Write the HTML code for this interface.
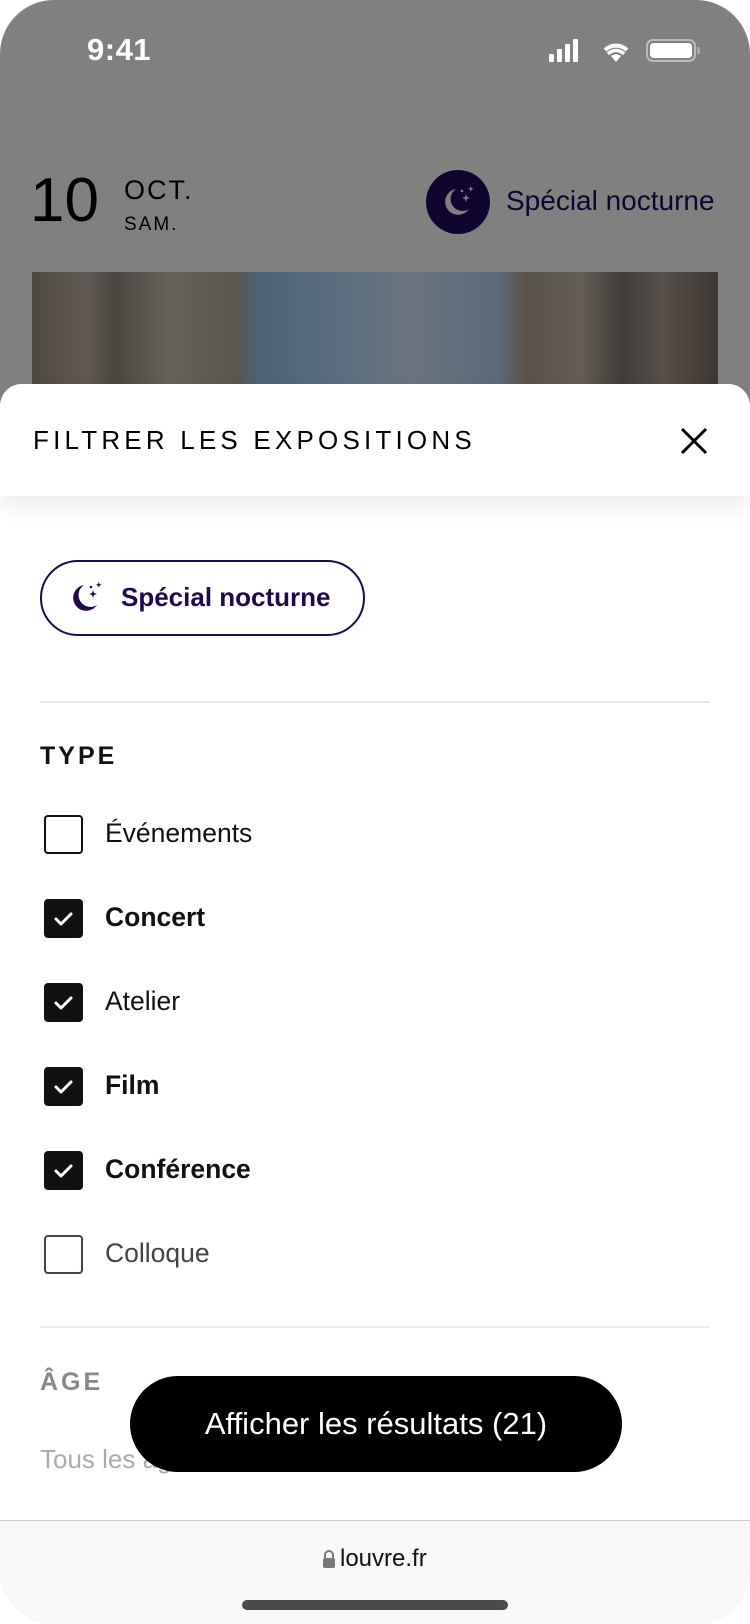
<!DOCTYPE html>
<html><head><meta charset="utf-8"><style>
*{margin:0;padding:0;box-sizing:border-box}
body{width:750px;height:1624px;overflow:hidden;background:#fff;font-family:"Liberation Sans",sans-serif;position:relative}
.frame{position:absolute;inset:0;border-radius:54px;overflow:hidden;background:#808080}
.abs{position:absolute}
.photo{left:32px;top:272px;width:686px;height:130px;background:linear-gradient(90deg,#4e4840 0%,#5f5a52 8%,#4a4640 12%,#66625a 20%,#5a564e 30%,#4c6378 33%,#5a6e80 45%,#6b7480 55%,#5a6a7a 68%,#5a5248 72%,#645e56 80%,#403c38 86%,#56504a 92%,#3e3630 100%)}
.sheet{left:0;top:384px;width:750px;height:1240px;background:#fff;border-radius:22px 22px 0 0}
.hdr{left:0;top:384px;width:750px;height:112px;background:#fff;border-radius:22px 22px 0 0;box-shadow:0 10px 22px rgba(0,0,0,0.08)}
.cb{position:absolute;left:44px;width:39px;height:39px;border-radius:4px}
.cb.off{border:2.5px solid #111;background:#fff}
.cb.on{background:#111}
.lbl{position:absolute;left:105px;font-size:26.5px;color:#111}
</style></head><body>
<div class="frame">
<div class="abs" style="left:87px;top:32px;font-size:31px;color:#fff;font-weight:bold;letter-spacing:0.5px">9:41</div>
<svg class="abs" style="left:548px;top:37px" width="152" height="28" viewBox="0 0 152 28">
<rect x="1" y="17" width="5" height="8" rx="1" fill="#fff"/><rect x="9" y="12" width="5" height="13" rx="1" fill="#fff"/><rect x="17" y="7" width="5" height="18" rx="1" fill="#fff"/><rect x="25" y="2" width="5" height="23" rx="1" fill="#fff"/>
<path d="M68 25 L63 19 A8 8 0 0 1 73 19 Z" fill="#fff"/><path d="M57 13 A16 16 0 0 1 79 13" stroke="#fff" stroke-width="4" fill="none"/><path d="M60 17 A11 11 0 0 1 76 17" stroke="#fff" stroke-width="3.5" fill="none"/>
<rect x="99" y="3" width="48" height="21" rx="6" fill="none" stroke="#bbb" stroke-width="2"/><rect x="102" y="6" width="42" height="15" rx="3.5" fill="#fff"/><rect x="149" y="10" width="3" height="7" rx="1" fill="#aaa"/>
</svg>
<div class="abs" style="left:30px;top:170px;font-size:62px;color:#000;line-height:1">10</div>
<div class="abs" style="left:124px;top:175px;font-size:27px;color:#000;letter-spacing:2px">OCT.</div>
<div class="abs" style="left:124px;top:214px;font-size:19px;color:#000;letter-spacing:2px">SAM.</div>
<svg class="abs" style="left:426px;top:170px" width="64" height="64" viewBox="0 0 64 64"><circle cx="32" cy="32" r="32" fill="#0f0530"/><path d="M30 19 A13 13 0 1 0 43 39 A11 11 0 0 1 30 19Z" fill="#808080"/><path d="M39 27l1 -3 1 3 3 1 -3 1 -1 3 -1 -3 -3 -1z" fill="#808080"/><path d="M44 18l.8 -2 .8 2 2 .8 -2 .8 -.8 2 -.8 -2 -2 -.8z" fill="#808080"/><circle cx="36" cy="21" r="1.3" fill="#808080"/></svg>
<div class="abs" style="left:506px;top:185px;font-size:28px;color:#0f0530">Spécial nocturne</div>
<div class="abs photo"></div>
<div class="abs sheet"></div>
<div class="abs hdr"></div>
<div class="abs" style="left:33px;top:425px;font-size:26px;color:#000;letter-spacing:4.2px">FILTRER LES EXPOSITIONS</div>
<svg class="abs" style="left:680px;top:427px" width="28" height="28" viewBox="0 0 28 28"><path d="M2 2L26 26M26 2L2 26" stroke="#000" stroke-width="3"/></svg>
<div class="abs" style="left:40px;top:560px;width:325px;height:76px;border:2.5px solid #1e0a4a;border-radius:38px"></div>
<svg class="abs" style="left:70px;top:582px" width="36" height="32" viewBox="0 0 36 32"><path d="M14 3 A13 13 0 1 0 27 23 A11 11 0 0 1 14 3Z" fill="#1e0a4a"/><path d="M22 11l1 -3 1 3 3 1 -3 1 -1 3 -1 -3 -3 -1z" fill="#1e0a4a"/><path d="M28 2l.8 -2 .8 2 2 .8 -2 .8 -.8 2 -.8 -2 -2 -.8z" fill="#1e0a4a"/><circle cx="21" cy="5" r="1.3" fill="#1e0a4a"/></svg>
<div class="abs" style="left:121px;top:582px;font-size:26px;color:#1e0a4a;font-weight:bold">Spécial nocturne</div>
<div class="abs" style="left:40px;top:701px;width:670px;height:2px;background:#e6e6e6"></div>
<div class="abs" style="left:40px;top:742px;font-size:25px;color:#111;letter-spacing:3px;font-weight:bold">TYPE</div>

<div class="cb off" style="top:815px"></div><div class="lbl" style="top:818px">Événements</div>
<div class="cb on" style="top:899px"></div><div class="lbl" style="top:902px;font-weight:bold">Concert</div>
<div class="cb on" style="top:983px"></div><div class="lbl" style="top:986px">Atelier</div>
<div class="cb on" style="top:1067px"></div><div class="lbl" style="top:1070px;font-weight:bold">Film</div>
<div class="cb on" style="top:1151px"></div><div class="lbl" style="top:1154px;font-weight:bold">Conférence</div>
<div class="cb off" style="top:1235px;border-color:#444"></div><div class="lbl" style="top:1238px;color:#444">Colloque</div>
<svg class="abs" style="left:44px;top:899px" width="39" height="300" viewBox="0 0 39 300">
<g fill="none" stroke="#fff" stroke-width="3" stroke-linecap="round" stroke-linejoin="round">
<path d="M12 20l5 5 10 -10"/><path d="M12 104l5 5 10 -10"/><path d="M12 188l5 5 10 -10"/><path d="M12 272l5 5 10 -10"/></g></svg>
<div class="abs" style="left:40px;top:1326px;width:670px;height:2px;background:#eee"></div>
<div class="abs" style="left:40px;top:1368px;font-size:25px;color:#888;letter-spacing:3px;font-weight:bold">ÂGE</div>
<div class="abs" style="left:40px;top:1444px;font-size:26px;color:#aaa">Tous les âges</div>
<div class="abs" style="left:130px;top:1376px;width:492px;height:96px;border-radius:48px;background:#000;color:#fff;font-size:31px;text-align:center;line-height:96px">Afficher les résultats (21)</div>
<div class="abs" style="left:0;top:1520px;width:750px;height:104px;background:#f8f8f8;border-top:1.5px solid #ccc"></div>
<svg class="abs" style="left:322px;top:1549px" width="14" height="20" viewBox="0 0 14 20"><path d="M3 9V6a4 4 0 0 1 8 0v3" stroke="#777" stroke-width="2" fill="none"/><rect x="1" y="9" width="12" height="10" rx="2" fill="#777"/></svg>
<div class="abs" style="left:340px;top:1545px;font-size:24px;color:#111">louvre.fr</div>
<div class="abs" style="left:242px;top:1600px;width:266px;height:10px;border-radius:5px;background:#4a4a4a"></div>
</div>
</body></html>
